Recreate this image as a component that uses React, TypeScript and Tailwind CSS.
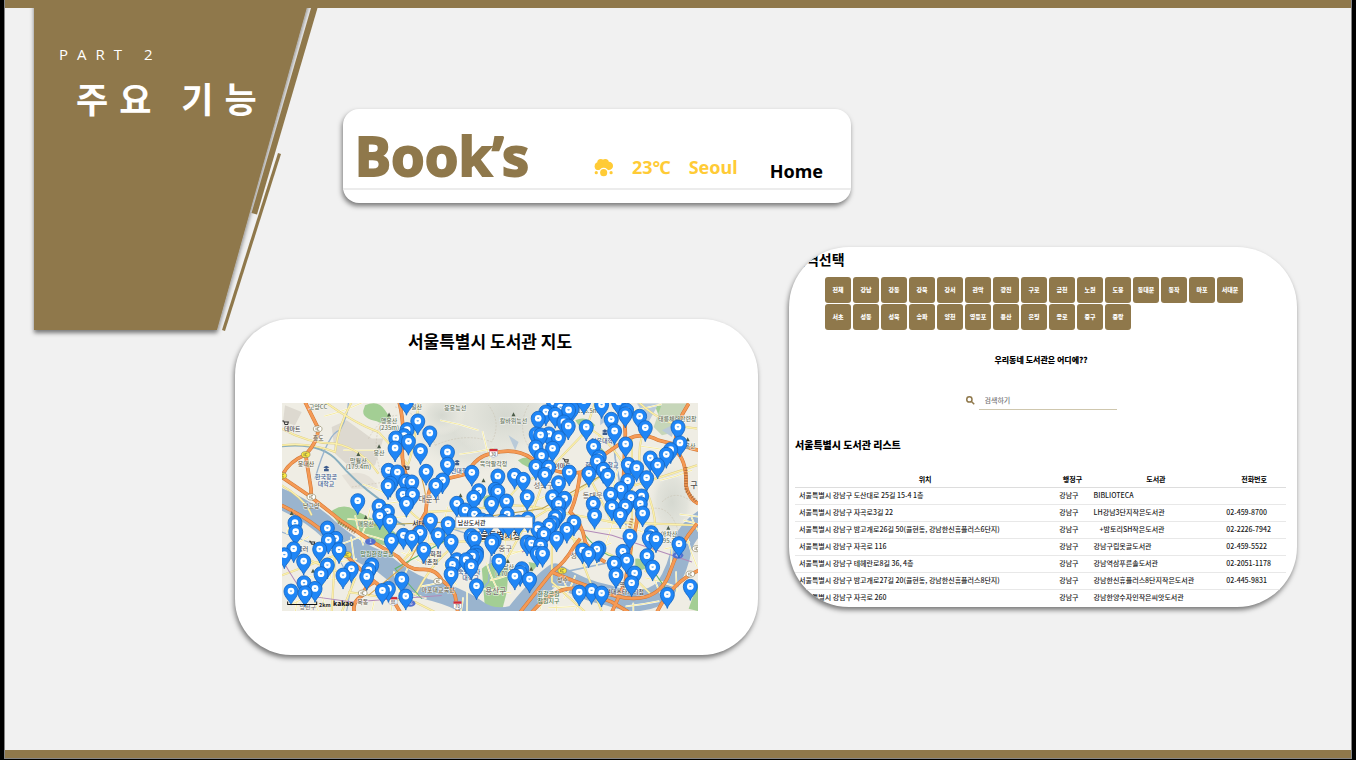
import React from "react";

const regions: string[] = [
  "전체", "강남", "강동", "강북", "강서", "관악", "광진", "구로", "금천", "노원", "도봉", "동대문", "동작", "마포", "서대문",
  "서초", "성동", "성북", "송파", "양천", "영등포", "용산", "은평", "종로", "중구", "중랑",
];

type Library = { address: string; district: string; name: string; phone: string; indent?: boolean };

const libraries: Library[] = [
  { address: "서울특별시 강남구 도산대로 25길 15-4 1층", district: "강남구", name: "BIBLIOTECA", phone: "" },
  { address: "서울특별시 강남구 자곡로3길 22", district: "강남구", name: "LH강남3단지작은도서관", phone: "02-459-8700" },
  { address: "서울특별시 강남구 밤고개로26길 50(율현동, 강남한신휴플러스6단지)", district: "강남구", name: "+밤토리SH작은도서관", phone: "02-2226-7942", indent: true },
  { address: "서울특별시 강남구 자곡로 116", district: "강남구", name: "강남구립못골도서관", phone: "02-459-5522" },
  { address: "서울특별시 강남구 테헤란로8길 36, 4층", district: "강남구", name: "강남역삼푸른솔도서관", phone: "02-2051-1178" },
  { address: "서울특별시 강남구 밤고개로27길 20(율현동, 강남한신휴플러스8단지)", district: "강남구", name: "강남한신휴플러스8단지작은도서관", phone: "02-445-9831" },
  { address: "서울특별시 강남구 자곡로 260", district: "강남구", name: "강남한양수자인작은씨앗도서관", phone: "" },
];

const pins: [number, number][] = [
  [394, 18], [428, 77], [396, 103], [464, 113], [387, 121], [362, 128], [400, 138], [360, 158], [436, 166], [517, 170],
  [517, 207], [340, 225], [367, 230], [453, 228], [590, 231], [392, 257], [410, 260], [502, 254], [482, 270], [346, 264],
  [339, 271], [668, 242], [718, 240], [744, 252], [611, 286], [668, 288], [384, 297], [412, 297], [660, 282], [756, 304],
  [596, 306], [394, 324], [248, 316], [312, 332], [337, 348], [545, 324], [649, 324], [694, 317], [570, 344], [314, 361],
  [344, 377], [598, 356], [696, 356], [620, 374], [640, 378], [730, 380], [758, 370], [466, 375], [519, 385], [60, 382],
  [62, 409], [157, 398], [182, 429], [160, 434], [435, 411], [385, 420], [410, 426], [489, 418], [349, 435], [528, 438],
  [598, 428], [588, 420], [657, 434], [650, 440], [56, 460], [134, 461], [192, 463], [446, 462], [28, 478], [86, 497],
  [157, 509], [604, 470], [592, 482], [545, 493], [573, 493], [532, 507], [588, 511], [671, 497], [229, 520], [290, 508],
  [281, 523], [275, 543], [138, 535], [204, 539], [528, 535], [380, 551], [719, 542], [740, 520], [735, 531], [763, 551],
  [87, 562], [120, 579], [48, 587], [90, 592], [340, 579], [322, 585], [604, 571], [392, 602], [835, 20], [890, 40],
  [812, 50], [789, 69], [840, 57], [856, 36], [880, 44], [866, 80], [879, 92], [933, 95], [926, 16], [979, 28],
  [1030, 20], [1008, 72], [1054, 45], [1050, 56], [1093, 63], [1110, 97], [1018, 107], [1208, 95], [783, 116], [796, 119],
  [821, 116], [850, 127], [782, 155], [832, 159], [799, 181], [782, 213], [820, 215], [809, 237], [882, 230], [955, 153],
  [1051, 146], [1214, 143], [1186, 163], [1173, 177], [1125, 188], [972, 185], [966, 197], [984, 222], [1059, 207], [1084, 217],
  [1147, 209], [941, 234], [997, 240], [1114, 247], [1057, 256], [850, 262], [1037, 280], [1006, 297], [1067, 307], [1099, 302],
  [832, 304], [868, 309], [850, 325], [954, 324], [1095, 325], [1010, 334], [1050, 332], [1035, 358], [958, 360], [1102, 353],
  [850, 355], [840, 364], [896, 380], [832, 382], [875, 402], [788, 400], [806, 415], [844, 428], [756, 440], [769, 443],
  [796, 449], [786, 473], [802, 474], [1064, 422], [1128, 412], [1142, 430], [1122, 427], [1211, 445], [922, 464], [940, 475],
  [971, 458], [965, 461], [1043, 468], [1054, 494], [1017, 503], [1115, 481], [1132, 515], [1022, 538], [1078, 533], [1069, 562],
  [912, 590], [949, 585], [979, 593], [1176, 597], [1245, 573], [822, 390], [604, 480], [700, 385], [684, 378],
];

const sortedPins = [...pins].sort((a, b) => a[1] - b[1]);

const highways: string[] = [
  "M90 20 L130 100 Q128 140 92 178 Q40 200 22 240",
  "M92 178 Q98 220 104 255 Q110 280 108 305",
  "M20 245 L108 305 L200 378 L290 438 L370 485 Q400 525 440 522 Q485 520 500 555 Q530 575 540 600 L548 650",
  "M20 330 Q110 375 150 415 Q250 520 300 560 Q270 570 262 600 Q230 620 238 650",
  "M300 560 Q350 600 375 650",
  "M378 450 Q430 395 452 350 Q458 275 480 258 Q540 245 575 235 Q605 180 650 175 Q720 155 770 190 Q820 190 825 220 Q870 240 920 230 Q1000 165 1060 130 Q1100 110 1150 135 L1270 165",
  "M372 20 Q388 80 382 150 Q378 200 395 245",
  "M1020 20 Q1052 60 1050 120 L1044 270 L1085 330 Q1092 370 1070 440 L1050 560 L1010 650",
  "M915 232 Q905 310 885 350 Q920 380 930 440 Q950 480 990 500",
  "M735 650 Q790 580 830 530 Q870 500 895 455 L915 430",
  "M830 530 Q900 560 960 580 Q1050 620 1110 605 Q1160 590 1180 540 Q1210 450 1265 385",
  "M770 650 Q840 570 910 580 L1010 620 L1060 650",
  "M1145 650 Q1190 560 1270 525",
  "M1240 25 Q1195 90 1200 165 Q1235 195 1232 270 Q1240 310 1268 325",
];

const avenues: string[] = [
  "M150 20 Q240 85 310 110 Q360 165 400 210",
  "M20 100 Q100 145 180 145 Q260 160 310 235",
  "M20 150 Q100 140 180 170 Q190 90 230 20",
  "M20 270 Q90 310 110 360",
  "M400 205 Q420 150 430 20",
  "M400 240 Q350 310 430 370 Q500 400 530 440 L770 430",
  "M450 350 Q580 345 690 330 Q780 330 850 350 L1010 380",
  "M690 330 Q720 260 810 235 L930 110 L960 20",
  "M810 235 Q790 310 760 370 L690 500",
  "M940 240 Q980 320 1010 380 L1265 390",
  "M1100 120 Q1080 200 1110 280 Q1170 400 1110 530",
  "M940 100 Q1010 130 1080 270 L1265 210",
  "M530 440 Q430 440 380 500",
  "M540 450 Q470 500 420 600",
  "M530 400 L740 390 L890 300 L1010 220",
  "M730 430 L850 410 L1010 480 L1130 600",
  "M890 420 Q930 520 980 650",
  "M20 460 L240 550 L200 650",
  "M20 540 L180 480 L170 650",
  "M220 590 L420 620 L480 650",
  "M1090 20 Q1160 90 1265 100",
  "M830 420 L830 560 L930 650",
  "M1070 130 L1070 500",
];

const streets: string[] = Array.from({ length: 90 }, (_, i) => {
  const x = 20 + ((i * 197) % 1240);
  const y = i % 3 === 0 ? 30 + ((i * 83) % 600) : 300 + ((i * 71) % 340);
  const dx = 50 + ((i * 37) % 70);
  const dy = ((i * 53) % 90) - 45;
  return i % 2 ? `M${x} ${y} q${dx / 2} ${dy / 3} ${dx} ${dy}` : `M${x} ${y} q${dy / 3} ${dx / 2} ${dy} ${dx}`;
});

type MapLabel = { x: number; y: number; text: string; color?: string; size?: number };

const labels: MapLabel[] = [
  { x: 129, y: 42, text: "고양CC", color: "#66735c" },
  { x: 52, y: 107, text: "데마트", color: "#4b4b4b" },
  { x: 130, y: 134, text: "흥도" },
  { x: 342, y: 84, text: "앵봉산", color: "#66735c" },
  { x: 342, y: 104, text: "(235m)", color: "#66735c" },
  { x: 312, y: 180, text: "봉산", color: "#66735c" },
  { x: 250, y: 203, text: "망월산", color: "#66735c" },
  { x: 250, y: 222, text: "(179.4m)", color: "#66735c" },
  { x: 93, y: 211, text: "봉대산" },
  { x: 153, y: 252, text: "한국항공", color: "#3c5b8c" },
  { x: 153, y: 271, text: "대학교", color: "#3c5b8c" },
  { x: 109, y: 337, text: "낭고양" },
  { x: 540, y: 44, text: "응봉능선", color: "#66735c" },
  { x: 715, y: 84, text: "칼바위능선", color: "#66735c" },
  { x: 655, y: 213, text: "북악팔각정", color: "#66735c" },
  { x: 552, y: 233, text: "전대학", color: "#3c5b8c" },
  { x: 462, y: 319, text: "대문구", color: "#78736c", size: 23 },
  { x: 272, y: 391, text: "매봉산", color: "#66735c" },
  { x: 430, y: 392, text: "서대", color: "#222222", size: 20 },
  { x: 306, y: 482, text: "망원한강공원", color: "#4f754b" },
  { x: 474, y: 483, text: "국화점", color: "#4b4b4b" },
  { x: 464, y: 505, text: "마촌점", color: "#4b4b4b" },
  { x: 664, y: 431, text: "서울특별시청", color: "#333333", size: 26 },
  { x: 690, y: 467, text: "중구", color: "#78736c", size: 22 },
  { x: 700, y: 521, text: "남산", color: "#66735c" },
  { x: 690, y: 541, text: "(270m)", color: "#66735c" },
  { x: 582, y: 536, text: "숙명여자", color: "#3c5b8c" },
  { x: 586, y: 555, text: "대학교", color: "#3c5b8c" },
  { x: 662, y: 595, text: "용산구", color: "#78736c", size: 23 },
  { x: 489, y: 591, text: "마포대교북단" },
  { x: 263, y: 626, text: "목동" },
  { x: 98, y: 641, text: "양천구", color: "#78736c", size: 18 },
  { x: 862, y: 559, text: "성수" },
  { x: 820, y: 602, text: "한강공원", color: "#4f754b" },
  { x: 820, y: 622, text: "잠원지구", color: "#4f754b" },
  { x: 1040, y: 574, text: "무역센", color: "#4b4b4b" },
  { x: 1048, y: 595, text: "현대스타시티점", color: "#4b4b4b" },
  { x: 1181, y: 422, text: "아차산", color: "#66735c" },
  { x: 1184, y: 442, text: "(295.7m)", color: "#66735c" },
  { x: 1206, y: 78, text: "태릉체력단련장", color: "#66735c" },
  { x: 938, y: 52, text: "(136.5m)", color: "#66735c" },
  { x: 980, y: 142, text: "여운대학", color: "#3c5b8c" },
  { x: 980, y: 216, text: "한국종합학교", color: "#3c5b8c" },
  { x: 952, y: 309, text: "동대문", color: "#78736c", size: 22 },
  { x: 805, y: 279, text: "성북구", color: "#78736c", size: 22 },
  { x: 862, y: 218, text: "이마트", color: "#333333" },
  { x: 1244, y: 158, text: "봉산", color: "#66735c" },
  { x: 1256, y: 277, text: "구", color: "#4b4b4b", size: 24 },
  { x: 895, y: 488, text: "성", color: "#78736c", size: 22 },
  { x: 75, y: 468, text: "홈플러", color: "#4b4b4b" },
  { x: 424, y: 42, text: "일산", color: "#66735c" },
];

const peaks: [number, number][] = [
  [342, 58], [312, 153], [250, 176], [715, 57], [625, 255], [272, 365], [50, 353], [114, 526], [698, 497], [1179, 397], [1237, 132], [556, 300], [768, 520],
];

const junctions: [number, number, boolean][] = [
  [128, 101, false], [92, 178, true], [22, 241, true], [109, 305, false], [216, 478, true], [263, 593, false],
  [489, 558, false], [861, 526, true], [1245, 536, false], [1264, 460, false],
];

function CityMap() {
  return (
    <svg
      viewBox="21 23 1247 624"
      preserveAspectRatio="xMidYMid slice"
      className="block h-[208px] w-full"
      role="img"
      aria-label="서울특별시 도서관 지도"
      style={{ fontFamily: '"Noto Sans CJK KR", sans-serif' }}
    >
      <defs>
        <radialGradient id="hill">
          <stop offset="0" stopColor="#d5d8d0" />
          <stop offset="0.6" stopColor="#e2e3db" />
          <stop offset="1" stopColor="#efede4" stopOpacity="0" />
        </radialGradient>
        <g id="pin">
          <path d="M0 42 C-3 28 -21 19 -21 0 A21 21 0 0 1 21 0 C21 19 3 28 0 42 Z" fill="#1f86f6" stroke="#1565c0" strokeWidth="2.5" />
          <circle r="10" fill="#fff" />
          <path d="M-4 -2 H4 L2 2 H-2 Z" fill="#5aa5ee" />
        </g>
      </defs>
      <rect x="21" y="23" width="1247" height="624" fill="#efede4" />
      <ellipse cx="600" cy="100" rx="230" ry="150" fill="url(#hill)" />
      <ellipse cx="690" cy="60" rx="170" ry="130" fill="url(#hill)" />
      <ellipse cx="500" cy="60" rx="70" ry="60" fill="url(#hill)" />
      <ellipse cx="1190" cy="320" rx="75" ry="120" fill="url(#hill)" />
      <path d="M170 95 L215 75 L290 130 L325 130 L300 210 L230 220 L180 175 Z M30 30 L80 50 L60 90 L24 80 Z" fill="#ddd9d0" />
      <path d="M200 240 Q260 220 290 250 T300 280 L230 280 Z" fill="#e5e1d8" />
      <g fill="#a3ce94">
        <path d="M270 30 Q310 12 330 45 L350 75 Q320 90 305 78 Q260 70 265 45 Z" />
        <path d="M165 350 Q205 320 240 345 L330 390 Q375 420 385 440 Q350 460 310 445 L190 385 Z" />
        <path d="M620 520 Q665 480 700 520 L695 590 L680 647 H630 Z" />
        <path d="M728 195 Q760 175 800 200 L790 220 Q750 220 728 195 Z" />
        <path d="M625 305 Q650 290 675 315 L655 350 L625 340 Z" />
        <path d="M700 365 Q730 350 750 385 L720 395 Z" />
        <path d="M1140 35 Q1160 20 1170 50 L1150 60 Z" />
        <path d="M900 75 Q935 60 960 90 L930 120 Z" />
        <path d="M950 130 L990 170 L960 180 Z M1080 490 Q1110 485 1110 520 L1080 530 Z" />
        <path d="M1240 640 L1268 560 V647 Z M760 500 L790 505 L770 530 Z" />
        <path d="M380 92 L420 95 L400 110 Z M1110 180 L1145 180 L1130 200 Z" />
      </g>
      <path d="M1160 25 L1240 25 L1200 110 L1160 120 L1135 95 Z" fill="#c6d6b9" />
      <path d="M1085 25 L1150 25 L1120 80 Z M1160 105 L1200 85 L1190 125 Z M700 120 L730 140 L720 165 Z M975 55 L1000 70 L975 90 Z" fill="#b9cad9" />
      <g fill="none" stroke="#9ab4ce" strokeLinejoin="round">
        <path d="M-10 300 Q100 340 170 410 Q240 470 320 500 Q390 560 450 580 Q540 600 600 640 Q650 680 720 660 Q790 570 840 535 Q920 585 1000 600 Q1110 640 1170 580 Q1210 520 1220 450 Q1240 400 1290 370" strokeWidth="62" />
        <path d="M20 153 Q140 140 190 200 Q240 260 310 310 Q350 380 390 390" strokeWidth="6" stroke="#88aebf" />
        <path d="M120 250 Q160 110 195 105 Q220 60 220 20 M530 400 L650 440 L640 560 L560 647" strokeWidth="4" />
        <path d="M1060 20 L1010 80 L1020 190 L1050 350 L1060 560 M720 560 L1010 500" strokeWidth="5" />
        <path d="M20 410 L180 470 L230 560 L215 647" strokeWidth="3" />
      </g>
      <g fill="none" stroke="#c5bdaa" strokeWidth="1.5" strokeDasharray="6 4">
        <path d="M280 130 Q320 60 370 60 M310 100 Q290 180 330 260 L230 275 M480 150 Q570 110 650 140 Q680 80 640 30 M1160 320 Q1200 280 1250 320" />
        <path d="M360 35 Q450 60 480 150 M760 30 Q720 100 770 170 M1100 350 Q1180 310 1210 410" />
      </g>
      <g fill="none" stroke="#fff" strokeWidth="5">{streets.map((d) => <path key={d} d={d} />)}</g>
      <g fill="none" stroke="#f5eba4" strokeWidth="3">{streets.map((d) => <path key={d} d={d} />)}</g>
      <g fill="none" stroke="#dccb84" strokeWidth="6">{avenues.map((d) => <path key={d} d={d} />)}</g>
      <g fill="none" stroke="#fbf0ac" strokeWidth="4">{avenues.map((d) => <path key={d} d={d} />)}</g>
      <g fill="none" strokeWidth="3">
        <path d="M440 250 Q480 380 400 500 L280 600 M700 300 L690 430 L860 430" stroke="#d7a54b" />
        <path d="M520 430 L360 520 L440 610 M890 360 Q940 450 1000 480 L1050 490 M1130 520 L1185 600" stroke="#61b568" />
        <path d="M20 490 Q60 560 90 600 L230 620 L500 600 M740 470 L900 400 L1010 420 L1250 500" stroke="#b28ab9" />
        <path d="M980 240 L800 340 L520 380 L280 390" stroke="#b9a14a" />
      </g>
      <g fill="none" stroke="#cf7534" strokeWidth="11">{highways.map((d) => <path key={d} d={d} />)}</g>
      <g fill="none" stroke="#f59a55" strokeWidth="8">{highways.map((d) => <path key={d} d={d} />)}</g>
      <path d="M190 380 L240 412 M1232 215 V285 L1262 318 M1070 370 L1062 400" fill="none" stroke="#93572c" strokeWidth="10" strokeDasharray="4 4" opacity="0.6" />
      {junctions.map(([x, y, yellow]) => (
        <g key={`${x}-${y}`}>
          <ellipse cx={x} cy={y} rx="13" ry="9" fill={yellow ? "#f7e83e" : "#fff"} stroke="#8c8560" strokeWidth="2" />
          <path d={`M${x - 5} ${y - 4} V${y + 4} M${x + 5} ${y - 4} H${x - 1} V${y + 4} H${x + 5}`} fill="none" stroke="#77704c" strokeWidth="2" />
        </g>
      ))}
      {peaks.map(([x, y]) => <path key={`${x}-${y}`} d={`M${x - 6} ${y + 6} L${x} ${y - 6} L${x + 6} ${y + 6} Z`} fill="#4b5b48" />)}
      <g fill="#3c5b8c">
        <path d="M145 216 L154 211 L163 216 L154 221 Z M147 221 H161 V228 H147 Z M538 198 L546 194 L554 198 L546 203 Z M540 203 H552 V210 H540 Z M980 107 L989 102 L998 107 L989 112 Z M982 112 H996 V119 H982 Z" />
      </g>
      <g fill="none" stroke="#333" strokeWidth="3">
        <path d="M22 77 H26 L30 88 H38 L40 80 H28 M385 212 H389 L393 222 H401 L402 215 H391 M862 190 H866 L870 200 H878 L879 193 H868 M102 438 H106 L110 447 H118 L119 440 H108" />
      </g>
      <g textAnchor="middle" stroke="#fff" strokeWidth="3" strokeOpacity="0.75" fontWeight="500">
        {labels.map((l) => (
          <text key={`${l.text}-${l.x}-${l.y}`} x={l.x} y={l.y} fontSize={l.size ?? 18} fill={l.color ?? "#655c48"} style={{ paintOrder: "stroke" }}>
            {l.text}
          </text>
        ))}
      </g>
      {([[655, 173, "30"], [354, 617, "88"], [547, 630, "70"]] as [number, number, string][]).map(([x, y, n]) => (
        <g key={n} transform={`translate(${x} ${y})`}>
          <path d="M-12 -12 H12 V8 L0 13 L-12 8 Z" fill="#fff" stroke="#8998b8" strokeWidth="1.5" />
          <path d="M-12 -12 H12 V-5 H-12 Z" fill="#d22b36" />
          <text y="8" fontSize="13" textAnchor="middle" fill="#333">{n}</text>
        </g>
      ))}
      {([[286, 439, "1"], [1208, 480, "46"], [405, 624, "46"]] as [number, number, string][]).map(([x, y, n]) => (
        <g key={`${x}`} transform={`translate(${x} ${y})`}>
          <ellipse rx="16" ry="10" fill="#5371cf" />
          <text y="5" fontSize="13" textAnchor="middle" fill="#fff">{n}</text>
        </g>
      ))}
      {sortedPins.map(([x, y]) => <use key={`${x}-${y}`} href="#pin" x={x} y={y} />)}
      <rect x="542" y="365" width="230" height="33" fill="#fff" stroke="#8d9cad" strokeWidth="2" />
      <text x="548" y="388" fontSize="18" fontWeight="500" fill="#222">남산도서관</text>
      <path d="M38 618 V627 H125 V618" fill="none" stroke="#111" strokeWidth="3" />
      <text x="132" y="636" fontSize="16" fontWeight="700" fill="#222">2km</text>
      <text x="174" y="633" fontSize="20" fontWeight="900" fill="#222">kakao</text>
    </svg>
  );
}

function SnowCloud() {
  return (
    <svg viewBox="770 186 62 58" className="h-[19px] w-5" fill="#ffcb36" aria-hidden="true">
      <circle cx="784" cy="211" r="12" />
      <circle cx="791" cy="200" r="11" />
      <circle cx="805" cy="200" r="11" />
      <circle cx="816" cy="210" r="13" />
      <rect x="784" y="203" width="32" height="20" />
      <circle cx="800" cy="231" r="15" fill="#fff" />
      <circle cx="800" cy="231" r="11" />
      <circle cx="777" cy="231" r="5" />
      <circle cx="823" cy="231" r="5" />
    </svg>
  );
}

const cardShadow = "shadow-[-1px_3px_5px_rgba(0,0,0,0.5)]";

function SectionBanner() {
  return (
    <header className="relative col-start-1 col-end-4 row-start-1 h-[323px] min-w-0 text-white">
      <svg viewBox="0 0 320 330" className="absolute top-0 left-0 h-[330px] w-[320px]" aria-hidden="true">
        <defs>
          <filter id="banner-shadow" x="-10%" y="-10%" width="120%" height="120%">
            <feDropShadow dx="0" dy="3" stdDeviation="2" floodColor="#000" floodOpacity="0.5" />
          </filter>
        </defs>
        <path d="M29 -8 H304 L212 322 H29 Z" fill="#8f784b" filter="url(#banner-shadow)" />
        <path d="M306 0 H312.500 L252 206.500 L246.500 205 Z" fill="#8f784b" />
        <path d="M273 145 L276 146 L220 323 L217 322 Z" fill="#8f784b" />
      </svg>
      <div className="relative pt-9 pl-[54px]">
        <p className="font-['Open_Sans',sans-serif] text-[15px] leading-5 tracking-[9px]">PART 2</p>
        <h1 className="mt-2.5 pl-[17px] text-[35px] leading-[48px] font-bold tracking-[11px] whitespace-nowrap">주요 기능</h1>
      </div>
    </header>
  );
}

export default function App() {
  return (
    <div className="min-h-screen bg-black px-1 pb-px font-['Noto_Sans_CJK_KR',sans-serif]">
      <div className="flex min-h-[759px] flex-col border-x border-b border-[#858585] bg-[#f1f1f1]">
        <div className="h-2 bg-[#8f784b]" />
        <main className="grid flex-1 grid-cols-[230fr_108fr_415fr_31fr_62fr_446fr_54fr] grid-rows-[311px_auto] items-start">
          <SectionBanner />

          <nav className={`col-start-3 col-end-6 row-start-1 mt-[101px] h-[94px] min-w-0 rounded-[16px] bg-white font-['Noto_Sans',sans-serif] ${cardShadow}`}>
            <div className="flex h-[81px] items-end border-b-2 border-[#ececec] pr-7 pl-3 font-bold whitespace-nowrap">
              <a href="#top" className="text-[54px] leading-[66px] text-[#8f784b] [-webkit-text-stroke:2px_#8f784b]">Book’s</a>
              <div className="mb-[7px] ml-auto flex items-center text-[18px] leading-7 text-[#ffcb36]">
                <SnowCloud />
                <span className="ml-[18px]">23℃</span>
                <span className="ml-[18px]">Seoul</span>
              </div>
              <a href="#home" className="mb-[3px] ml-8 text-[18px] leading-7 text-black">Home</a>
            </div>
          </nav>

          <section className={`col-start-2 col-end-4 row-start-2 h-[336px] min-w-0 rounded-[56px] bg-white pt-2.5 pr-[60px] pl-[47px] ${cardShadow}`}>
            <h2 className="text-center text-[17px] leading-6 font-bold text-black">서울특별시 도서관 지도</h2>
            <div className="mt-[50px]">
              <CityMap />
            </div>
          </section>

          <section className={`col-start-5 col-end-7 row-start-1 row-end-3 mt-[239px] h-[360px] min-w-0 overflow-hidden rounded-[60px] bg-white text-black ${cardShadow}`}>
            <h2 className="pt-0.5 pl-1 text-[14px] leading-5 font-bold">지역선택</h2>
            <div className="mt-2 ml-9 flex max-w-[420px] flex-wrap gap-x-0.5 gap-y-px">
              {regions.map((r) => (
                <button key={r} type="button" className="h-[26px] w-[26px] rounded-[3px] bg-[#8f784b] text-[6px] leading-none font-black whitespace-nowrap text-white">
                  {r}
                </button>
              ))}
            </div>
            <div className="pr-1">
              <p className="mt-[22px] text-center text-[8px] leading-4 font-black">우리동네 도서관은 어디에??</p>
              <div className="mt-[23px] flex items-center justify-center gap-1">
                <svg viewBox="0 0 24 24" className="h-[9px] w-[9px]" fill="none" stroke="#8f784b" strokeWidth="4" aria-hidden="true">
                  <circle cx="9" cy="9" r="7" />
                  <path d="M14 14 L22 22" />
                </svg>
                <input
                  type="text"
                  aria-label="검색하기"
                  placeholder="검색하기"
                  className="h-[19px] w-[138px] border-b border-[#cfc7ae] px-1.5 text-[7px] font-medium placeholder:text-[#777777]"
                />
              </div>
            </div>
            <h3 className="mt-[27px] ml-1.5 text-[10px] leading-4 font-black">서울특별시 도서관 리스트</h3>
            <table className="mt-5 mr-[11px] ml-1.5 w-[calc(100%-17px)] table-fixed border-collapse text-[7px] leading-none whitespace-nowrap">
              <thead>
                <tr className="h-[14px] border-b border-[#dddddd]">
                  <th scope="col" className="w-[53%] p-0">위치</th>
                  <th scope="col" className="w-[7%] p-0">행정구</th>
                  <th scope="col" className="w-[27%] p-0">도서관</th>
                  <th scope="col" className="w-[13%] p-0">전화번호</th>
                </tr>
              </thead>
              <tbody className="font-medium text-[#222222]">
                {libraries.map((l) => (
                  <tr key={l.address} className="h-[17px] border-b border-[#e8e8e8] last:border-b-0">
                    <td className="px-1 py-0">{l.address}</td>
                    <td className="px-1 py-0">{l.district}</td>
                    <td className={l.indent ? "py-0 pr-1 pl-2.5" : "px-1 py-0"}>{l.name}</td>
                    <td className="px-1 py-0">{l.phone}</td>
                  </tr>
                ))}
              </tbody>
            </table>
          </section>
        </main>
        <div className="h-2 bg-[#8f784b]" />
      </div>
    </div>
  );
}
